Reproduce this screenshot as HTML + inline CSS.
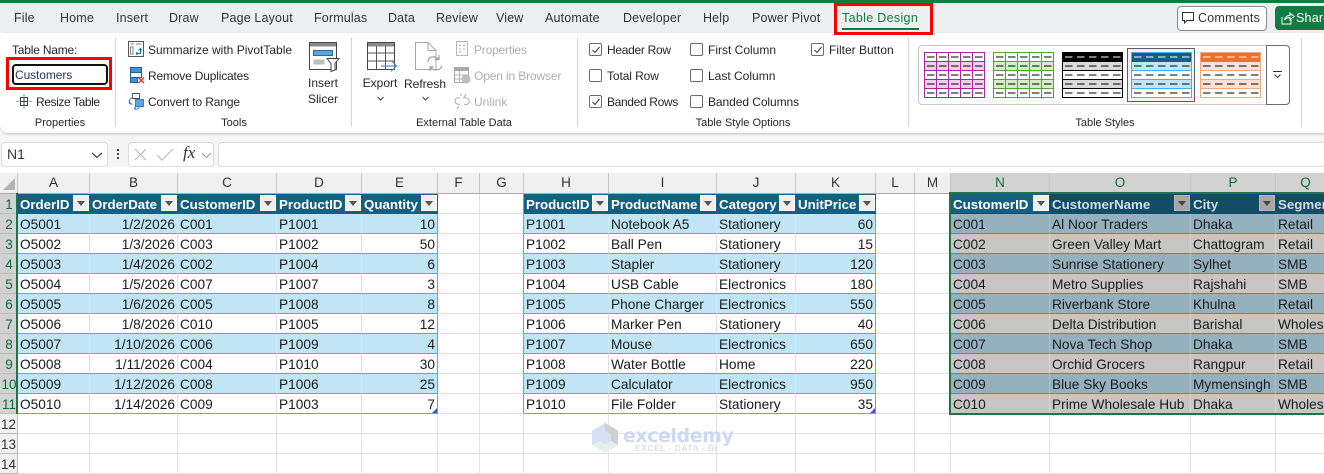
<!DOCTYPE html>
<html>
<head>
<meta charset="utf-8">
<style>
html,body{margin:0;padding:0;width:1324px;height:470px;overflow:hidden;background:#fff;font-family:"Liberation Sans",sans-serif;color:#242424}
.a{position:absolute;white-space:nowrap}
.t{position:absolute;white-space:nowrap;font-size:12px;line-height:16px;letter-spacing:0;color:#262626}
.c{transform:translateX(-50%);font-size:11px}
.n{letter-spacing:-.15px}
.tab{font-size:12.5px;line-height:16px;top:10px;letter-spacing:.15px;color:#333}
.g{color:#aeaeae}
.sep{position:absolute;top:38px;width:1px;height:89px;background:#d4d4d4}
.cb{position:absolute;width:11px;height:11px;border:1px solid #6b6b6b;border-radius:2px;background:#fff}
.cb svg{position:absolute;left:1px;top:1px}
svg{position:absolute;overflow:visible}
table{position:absolute;left:0;top:173px;border-collapse:separate;border-spacing:0;table-layout:fixed;width:1336px;font-size:13.7px;color:#1a1a1a}
th,td{box-sizing:border-box;height:20px;padding:2px 0 0 2px;overflow:hidden;white-space:nowrap;border-right:1px solid #e1e1e1;border-bottom:1px solid #e1e1e1;position:relative;font-weight:normal;line-height:17px;text-align:left}
th{background:#f0f0f0;text-align:center;padding:2px 0 0;color:#333;border-right:1px solid #bcbcbc;border-bottom:1px solid #bcbcbc;font-size:13.5px}
tr.ch th{height:21px;padding:0;line-height:20px;border-right:1px solid #c4c4c4;border-bottom:1px solid #aaa}
tr.ch th.s{background:#d2d2d2;color:#0f6b3a}
tr.sr th{background:#d2d2d2;color:#0f6b3a;border-right:none}
td.r{text-align:right;padding:2px 2px 0 0}
tr.h td{font-size:13.3px}
tr.h td:nth-child(n+2):nth-child(-n+6),tr.h td:nth-child(n+9):nth-child(-n+12){background:#156082;color:#fff;font-weight:bold;border-right-color:#156082;border-bottom-color:#156082}
tr.h td:nth-child(n+15){background:#124c66;color:#d3dde3;font-weight:bold;border-right-color:#124c66;border-bottom-color:#124c66}
tr.h td:nth-child(15){background:#156082;color:#fff}
tr.o td:nth-child(n+2):nth-child(-n+6),tr.o td:nth-child(n+9):nth-child(-n+12){background:#c0e6f5;border-right-color:#cde8f5;border-bottom-color:#45b0e1}
tr.e td:nth-child(n+2):nth-child(-n+6),tr.e td:nth-child(n+9):nth-child(-n+12){border-bottom-color:#45b0e1}
tr.o td:nth-child(n+15){background:#95b1c0;border-right-color:#a9bfcb;border-bottom-color:#3f8fb5}
tr.e td:nth-child(n+15){background:#c6c6c6;border-right-color:#d6d6d6;border-bottom-color:#3f8fb5}
tr.o td:nth-child(6),tr.e td:nth-child(6),tr.o td:nth-child(8),tr.e td:nth-child(8),tr.o td:nth-child(12),tr.e td:nth-child(12),tr.h td:nth-child(8){border-right-color:#45b0e1!important}
i.f{position:absolute;right:0;top:1px;width:16px;height:16px;background:#eee;border:1px solid #fff;box-sizing:border-box}
i.f:after{content:"";position:absolute;left:3px;top:5px;border-left:4px solid transparent;border-right:4px solid transparent;border-top:5px solid #555}
i.d{background:#a6a6a6;border-color:#b8b8b8}
i.d:after{border-top-color:#444}
</style>
</head>
<body>
<!-- title strip -->
<div class="a" style="left:0;top:0;width:1324px;height:33px;background:#eeeff1"></div>
<div class="a" style="left:0;top:0;width:1324px;height:3px;background:#107c41"></div>
<div class="a" style="left:0;top:133px;width:1324px;height:34px;background:#f5f5f5"></div>
<div class="a" style="left:0;top:33px;width:1324px;height:100px;background:#fff;border-radius:8px 0 0 8px;box-shadow:0 1px 2px rgba(0,0,0,.22)"></div>

<div class="a tab" style="left:14px">File</div>
<div class="a tab" style="left:60px">Home</div>
<div class="a tab" style="left:116px">Insert</div>
<div class="a tab" style="left:169px">Draw</div>
<div class="a tab" style="left:221px">Page Layout</div>
<div class="a tab" style="left:314px">Formulas</div>
<div class="a tab" style="left:388px">Data</div>
<div class="a tab" style="left:436px">Review</div>
<div class="a tab" style="left:496px">View</div>
<div class="a tab" style="left:545px">Automate</div>
<div class="a tab" style="left:623px">Developer</div>
<div class="a tab" style="left:703px">Help</div>
<div class="a tab" style="left:752px">Power Pivot</div>
<div class="a tab" style="left:842px;color:#107c41;letter-spacing:.32px">Table Design</div>
<div class="a" style="left:842px;top:28px;width:77px;height:2px;background:#107c41"></div>
<div class="a" style="left:834px;top:3px;width:93px;height:26px;border:3px solid #f00"></div>

<!-- comments and share -->
<div class="a" style="left:1177px;top:6px;width:88px;height:23px;background:#fff;border:1px solid #8a8a8a;border-radius:4px"></div>
<svg style="left:1182px;top:12px" width="13" height="13" viewBox="0 0 13 13"><path d="M.5 .5H11.500V8.500H5L2.500 11V8.500H.5Z" fill="none" stroke="#333"/></svg>
<div class="a tab" style="left:1198px;top:10px;font-size:12.5px;letter-spacing:.2px">Comments</div>
<div class="a" style="left:1275px;top:6px;width:70px;height:24px;background:#107c41;border-radius:4px"></div>
<svg style="left:1280px;top:11px" width="15" height="15" viewBox="0 0 15 15"><path d="M2 6V13H11V9M4.500 9C5 6 7 4.500 10 4.500V2L14 5.500L10 9V6.500C8 6.500 6 7 4.500 9Z" fill="none" stroke="#fff"/></svg>
<div class="a tab" style="left:1296px;color:#fff;font-size:12.5px;letter-spacing:.2px">Share</div>

<!-- separators -->
<div class="sep" style="left:115px"></div>
<div class="sep" style="left:351px"></div>
<div class="sep" style="left:577px"></div>
<div class="sep" style="left:908px"></div>
<div class="sep" style="left:1301px"></div>

<!-- Properties group -->
<div class="t" style="left:12px;top:42px;letter-spacing:-.2px">Table Name:</div>
<div class="a" style="left:6px;top:57px;width:100px;height:27px;border:3px solid #f00"></div>
<div class="a" style="left:12px;top:64px;width:92px;height:17px;border:2px solid #111;border-radius:4px;background:#fff"></div>
<div class="t" style="left:15px;top:67px;color:#1f3864;letter-spacing:-.1px">Customers</div>
<svg style="left:16px;top:94px" width="16" height="15" viewBox="0 0 16 15"><path d="M4.500 3.500H11.500V11.500H4.500ZM4.500 7.500H11.500M8 3.500V11.500" fill="none" stroke="#444"/><path d="M8 .5V2.500M8 12.500V14.500M.5 7.500H2.500M13.500 7.500H15.500" stroke="#2b7cd3"/></svg>
<div class="t" style="left:36px;top:94px;letter-spacing:-.4px">Resize Table</div>
<div class="t c" style="left:60px;top:115px">Properties</div>

<!-- Tools group -->
<svg style="left:128px;top:41px" width="16" height="16" viewBox="0 0 16 16"><path d="M.5 .5H15.500V15.500H.5Z" fill="#fff" stroke="#555"/><path d="M2.500 3H6M8 3H13.500M2.500 6H5V13H2.500Z" fill="none" stroke="#888"/><path d="M8 12.500H12.500V7.500M10.500 9.500L12.500 7.500L14 9.500M8 12.500L9.500 11M8 12.500L9.500 14" fill="none" stroke="#0f6cbd"/></svg>
<div class="t" style="left:148px;top:42px">Summarize with PivotTable</div>
<svg style="left:130px;top:67px" width="15" height="17" viewBox="0 0 15 17"><rect x=".5" y=".5" width="11" height="5" fill="#3f94d6" stroke="#245f93"/><rect x=".5" y="5.500" width="11" height="5" fill="#fff" stroke="#245f93"/><rect x=".5" y="10.500" width="7" height="5" fill="#3f94d6" stroke="#245f93"/><path d="M8.500 10.500L14 16M14 10.500L8.500 16" stroke="#e5312f" stroke-width="1.400"/></svg>
<div class="t" style="left:148px;top:68px;letter-spacing:-.18px">Remove Duplicates</div>
<svg style="left:128px;top:93px" width="17" height="17" viewBox="0 0 17 17"><rect x="4.500" y=".5" width="7" height="5" fill="#fff" stroke="#555"/><rect x="7.500" y="6.500" width="8" height="7" fill="#5ba6dc" stroke="#3b7fb4"/><path d="M4 5C1 6 .5 9 2 11M2 11V8.500M2 11H4.500M6 15.500C8 16.500 10 16 11 15M11 15V13M6 15.500L8 14M6 15.500L8 16.500" fill="none" stroke="#2b7cd3"/></svg>
<div class="t" style="left:148px;top:94px;letter-spacing:-.13px">Convert to Range</div>
<svg style="left:309px;top:42px" width="30" height="30" viewBox="0 0 30 30"><rect x=".5" y=".5" width="27" height="27" fill="#fff" stroke="#444"/><rect x="1" y="1" width="26" height="3.500" fill="#8a8a8a"/><rect x="4.500" y="8.500" width="19" height="5" fill="#5aa6dc" stroke="#1f6fb0"/><rect x="4.500" y="17.500" width="11" height="5" fill="#bdbdbd"/><path d="M18 16.500H30L26 21.500V28L22 29.500V21.500Z" fill="#fff" stroke="#444"/></svg>
<div class="t c" style="left:323px;top:75px;font-size:12px">Insert</div>
<div class="t c" style="left:323px;top:91px;font-size:12px">Slicer</div>
<div class="t c" style="left:234px;top:115px">Tools</div>

<!-- External data -->
<svg style="left:367px;top:42px" width="31" height="30" viewBox="0 0 31 30"><rect x=".5" y=".5" width="27" height="27" fill="#fff" stroke="#444"/><rect x="1" y="1" width="26" height="3.500" fill="#8a8a8a"/><path d="M1 11H27M1 19H27M9.500 4V27M18.500 4V27" stroke="#555" fill="none"/><path d="M14 24H29.500M24 18.500L29.500 24L24 29.500" stroke="#3f94d6" fill="none" stroke-width="1.200"/></svg>
<div class="t c" style="left:380px;top:75px;font-size:12px">Export</div>
<svg style="left:376px;top:96px" width="9" height="6" viewBox="0 0 9 6"><path d="M1.500 1L4.500 4L7.500 1" fill="none" stroke="#444"/></svg>
<svg style="left:415px;top:42px" width="29" height="30" viewBox="0 0 29 30"><path d="M.5 .5H13L21 8.500V27.500H.5Z" fill="#fff" stroke="#a8a8a8"/><path d="M13 .5V8.500H21" fill="none" stroke="#a8a8a8"/><path d="M13 20C13 15 19 13 24 17M27 24C25 29 18 29 15 25M24 13V17.500H19.500M15 29V25H19" fill="none" stroke="#a0a0a0" stroke-width="1.200"/></svg>
<div class="t c" style="left:425px;top:76px;font-size:12px">Refresh</div>
<svg style="left:421px;top:96px" width="9" height="6" viewBox="0 0 9 6"><path d="M1.500 1L4.500 4L7.500 1" fill="none" stroke="#444"/></svg>
<svg style="left:456px;top:41px" width="14" height="16" viewBox="0 0 14 16"><rect x=".5" y=".5" width="11" height="14" fill="#fff" stroke="#b5b5b5"/><path d="M3 4.500H5M7 4.500H9M3 8H5M3 11H5M7 8H9" stroke="#a5a5a5"/></svg>
<div class="t g" style="left:474px;top:42px;letter-spacing:-.2px">Properties</div>
<svg style="left:454px;top:67px" width="17" height="17" viewBox="0 0 17 17"><rect x=".5" y=".5" width="14" height="15" fill="#fff" stroke="#a9a9a9"/><rect x="1" y="1" width="13" height="3" fill="#a9a9a9"/><path d="M1 8H14M1 12H14M5.500 4V16" stroke="#b5b5b5"/><circle cx="12" cy="12" r="4.500" fill="#bdbdbd"/></svg>
<div class="t g" style="left:474px;top:68px;letter-spacing:-.14px">Open in Browser</div>
<svg style="left:454px;top:93px" width="17" height="17" viewBox="0 0 17 17"><path d="M6 5C3 4 1 6 1 8S3 12 6 11M9 5C12 4 16 6 15 9S12 12 10 11M5 13L3 16M7 .5V3M12 1L10 4" fill="none" stroke="#ababab"/></svg>
<div class="t g" style="left:474px;top:94px">Unlink</div>
<div class="t c" style="left:464px;top:115px">External Table Data</div>

<!-- checkboxes -->
<div class="cb" style="left:589px;top:43px"><svg width="10" height="10" viewBox="0 0 10 10"><path d="M1.500 5L4 7.500L8.500 2" fill="none" stroke="#333"/></svg></div>
<div class="t" style="left:607px;top:42px;letter-spacing:-.3px">Header Row</div>
<div class="cb" style="left:589px;top:69px"></div>
<div class="t" style="left:607px;top:68px;letter-spacing:-.1px">Total Row</div>
<div class="cb" style="left:589px;top:95px"><svg width="10" height="10" viewBox="0 0 10 10"><path d="M1.500 5L4 7.500L8.500 2" fill="none" stroke="#333"/></svg></div>
<div class="t" style="left:607px;top:94px;letter-spacing:-.35px">Banded Rows</div>
<div class="cb" style="left:690px;top:43px"></div>
<div class="t" style="left:708px;top:42px">First Column</div>
<div class="cb" style="left:690px;top:69px"></div>
<div class="t" style="left:708px;top:68px">Last Column</div>
<div class="cb" style="left:690px;top:95px"></div>
<div class="t" style="left:708px;top:94px;letter-spacing:-.07px">Banded Columns</div>
<div class="cb" style="left:811px;top:43px"><svg width="10" height="10" viewBox="0 0 10 10"><path d="M1.500 5L4 7.500L8.500 2" fill="none" stroke="#333"/></svg></div>
<div class="t" style="left:829px;top:42px">Filter Button</div>
<div class="t c" style="left:743px;top:115px">Table Style Options</div>

<!-- gallery -->
<div class="a" style="left:918px;top:45px;width:370px;height:58px;border:1px solid #c8c8c8;border-radius:4px;background:#fff"></div>
<div class="a" style="left:1266px;top:45px;width:22px;height:58px;border:1px solid #6e6e6e;border-radius:0 4px 4px 0;background:#fff"></div>
<svg style="left:1272px;top:70px" width="12" height="10" viewBox="0 0 12 10"><path d="M1 1.500H10M2.500 4.500L5.500 7.500L8.500 4.500" fill="none" stroke="#333"/></svg>
<div class="a" style="left:1127px;top:48px;width:66px;height:52px;border:1px solid #5c5c5c;background:#f3f3f3"></div>

<svg style="left:924px;top:52px" width="62" height="47" viewBox="0 0 62 47"><rect x=".5" y=".5" width="60" height="45" fill="#fff" stroke="#a6269b"/><rect x="1" y="10" width="59" height="8" fill="#f1cdee"/><rect x="1" y="28" width="59" height="8" fill="#f1cdee"/><path d="M1 9.500H60M1 18.500H60M1 27.500H60M1 36.500H60M12.500 1V46M24.500 1V46M36.500 1V46M48.500 1V46" stroke="#a6269b" fill="none"/><path d="M3 5H60M3 14H60M3 23H60M3 32H60M3 41H60" stroke="#000" stroke-dasharray="7.500 4.500" fill="none"/></svg>
<svg style="left:993px;top:52px" width="62" height="47" viewBox="0 0 62 47"><rect x=".5" y=".5" width="60" height="45" fill="#fff" stroke="#4ea72e"/><rect x="1" y="10" width="59" height="8" fill="#d5efca"/><rect x="1" y="28" width="59" height="8" fill="#d5efca"/><path d="M1 9.500H60M1 18.500H60M1 27.500H60M1 36.500H60M12.500 1V46M24.500 1V46M36.500 1V46M48.500 1V46" stroke="#4ea72e" fill="none"/><path d="M3 5H60M3 14H60M3 23H60M3 32H60M3 41H60" stroke="#000" stroke-dasharray="7.500 4.500" fill="none"/></svg>
<svg style="left:1062px;top:52px" width="62" height="47" viewBox="0 0 62 47"><rect x=".5" y=".5" width="60" height="45" fill="#fff" stroke="#000"/><rect x="1" y="1" width="59" height="9" fill="#000"/><rect x="1" y="10" width="59" height="8" fill="#d9d9d9"/><rect x="1" y="28" width="59" height="8" fill="#d9d9d9"/><path d="M1 18.500H60M1 27.500H60M1 36.500H60M1 9.500H60" stroke="#000" fill="none"/><path d="M3 5H60" stroke="#fff" stroke-dasharray="7.500 4.500" fill="none"/><path d="M3 14H60M3 23H60M3 32H60M3 41H60" stroke="#000" stroke-dasharray="7.500 4.500" fill="none"/></svg>
<svg style="left:1131px;top:52px" width="62" height="47" viewBox="0 0 62 47"><rect x=".5" y=".5" width="60" height="45" fill="#fff" stroke="#45b0e1"/><rect x="1" y="1" width="59" height="9" fill="#156082"/><rect x="1" y="10" width="59" height="8" fill="#c0e6f5"/><rect x="1" y="28" width="59" height="8" fill="#c0e6f5"/><path d="M1 18.500H60M1 27.500H60M1 36.500H60" stroke="#45b0e1" fill="none"/><path d="M3 5H60" stroke="#fff" stroke-dasharray="7.500 4.500" fill="none"/><path d="M3 14H60M3 23H60M3 32H60M3 41H60" stroke="#000" stroke-dasharray="7.500 4.500" fill="none"/></svg>
<svg style="left:1200px;top:52px" width="62" height="47" viewBox="0 0 62 47"><rect x=".5" y=".5" width="60" height="45" fill="#fff" stroke="#f4a77f"/><rect x="1" y="1" width="59" height="9" fill="#e97132"/><rect x="1" y="10" width="59" height="8" fill="#fbe1d5"/><rect x="1" y="28" width="59" height="8" fill="#fbe1d5"/><path d="M1 18.500H60M1 27.500H60M1 36.500H60" stroke="#f4a77f" fill="none"/><path d="M3 5H60" stroke="#fff" stroke-dasharray="7.500 4.500" fill="none"/><path d="M3 14H60M3 23H60M3 32H60M3 41H60" stroke="#000" stroke-dasharray="7.500 4.500" fill="none"/></svg>
<div class="t c" style="left:1105px;top:115px">Table Styles</div>

<!-- formula bar -->
<div class="a" style="left:1px;top:142px;width:105px;height:23px;background:#fff;border:1px solid #dcdcdc;border-radius:4px"></div>
<div class="a" style="left:7px;top:146px;font-size:14px;line-height:16px;color:#333">N1</div>
<svg style="left:91px;top:152px" width="12" height="7" viewBox="0 0 12 7"><path d="M1 1L6 5.500L11 1" fill="none" stroke="#444" stroke-width="1.200"/></svg>
<div class="a" style="left:117px;top:149px;width:2px;height:2px;background:#444;box-shadow:0 4px 0 #444,0 8px 0 #444"></div>
<div class="a" style="left:128px;top:142px;width:84px;height:23px;background:#fff;border:1px solid #dcdcdc;border-radius:4px"></div>
<svg style="left:134px;top:148px" width="40" height="13" viewBox="0 0 40 13"><path d="M1 1L12 12M12 1L1 12" stroke="#bcbcbc" fill="none" stroke-width="1.200"/><path d="M23 7L28 12L39 1" stroke="#bcbcbc" fill="none" stroke-width="1.200"/></svg>
<div class="a" style="left:183px;top:144px;font:italic 17px/18px 'Liberation Serif',serif;color:#333">fx</div>
<svg style="left:201px;top:152px" width="11" height="7" viewBox="0 0 11 7"><path d="M1 1L5.500 5.500L10 1" fill="none" stroke="#9a9a9a" stroke-width="1.100"/></svg>
<div class="a" style="left:218px;top:142px;width:1110px;height:23px;background:#fff;border:1px solid #dcdcdc;border-radius:4px"></div>

<!-- sheet -->
<table>
<colgroup><col style="width:18px"><col style="width:72px"><col style="width:88px"><col style="width:99px"><col style="width:85px"><col style="width:76px"><col style="width:42px"><col style="width:44px"><col style="width:85px"><col style="width:108px"><col style="width:79px"><col style="width:80px"><col style="width:39px"><col style="width:36px"><col style="width:99px"><col style="width:141px"><col style="width:85px"><col style="width:60px"></colgroup>
<tr class="ch"><th></th><th>A</th><th>B</th><th>C</th><th>D</th><th>E</th><th>F</th><th>G</th><th>H</th><th>I</th><th>J</th><th>K</th><th>L</th><th>M</th><th class="s">N</th><th class="s">O</th><th class="s">P</th><th class="s">Q</th></tr>
<tr class="h sr"><th>1</th><td>OrderID<i class="f"></i></td><td>OrderDate<i class="f"></i></td><td>CustomerID<i class="f"></i></td><td>ProductID<i class="f"></i></td><td>Quantity<i class="f"></i></td><td></td><td></td><td>ProductID<i class="f"></i></td><td>ProductName<i class="f"></i></td><td>Category<i class="f"></i></td><td>UnitPrice<i class="f"></i></td><td></td><td></td><td>CustomerID<i class="f"></i></td><td>CustomerName<i class="f d"></i></td><td>City<i class="f d"></i></td><td>Segment</td></tr>
<tr class="o sr"><th>2</th><td>O5001</td><td class="r">1/2/2026</td><td>C001</td><td>P1001</td><td class="r">10</td><td></td><td></td><td>P1001</td><td>Notebook A5</td><td>Stationery</td><td class="r">60</td><td></td><td></td><td>C001</td><td>Al Noor Traders</td><td>Dhaka</td><td>Retail</td></tr>
<tr class="e sr"><th>3</th><td>O5002</td><td class="r">1/3/2026</td><td>C003</td><td>P1002</td><td class="r">50</td><td></td><td></td><td>P1002</td><td>Ball Pen</td><td>Stationery</td><td class="r">15</td><td></td><td></td><td>C002</td><td>Green Valley Mart</td><td>Chattogram</td><td>Retail</td></tr>
<tr class="o sr"><th>4</th><td>O5003</td><td class="r">1/4/2026</td><td>C002</td><td>P1004</td><td class="r">6</td><td></td><td></td><td>P1003</td><td>Stapler</td><td>Stationery</td><td class="r">120</td><td></td><td></td><td>C003</td><td>Sunrise Stationery</td><td>Sylhet</td><td>SMB</td></tr>
<tr class="e sr"><th>5</th><td>O5004</td><td class="r">1/5/2026</td><td>C007</td><td>P1007</td><td class="r">3</td><td></td><td></td><td>P1004</td><td>USB Cable</td><td>Electronics</td><td class="r">180</td><td></td><td></td><td>C004</td><td>Metro Supplies</td><td>Rajshahi</td><td>SMB</td></tr>
<tr class="o sr"><th>6</th><td>O5005</td><td class="r">1/6/2026</td><td>C005</td><td>P1008</td><td class="r">8</td><td></td><td></td><td>P1005</td><td>Phone Charger</td><td>Electronics</td><td class="r">550</td><td></td><td></td><td>C005</td><td>Riverbank Store</td><td>Khulna</td><td>Retail</td></tr>
<tr class="e sr"><th>7</th><td>O5006</td><td class="r">1/8/2026</td><td>C010</td><td>P1005</td><td class="r">12</td><td></td><td></td><td>P1006</td><td>Marker Pen</td><td>Stationery</td><td class="r">40</td><td></td><td></td><td>C006</td><td>Delta Distribution</td><td>Barishal</td><td>Wholesale</td></tr>
<tr class="o sr"><th>8</th><td>O5007</td><td class="r">1/10/2026</td><td>C006</td><td>P1009</td><td class="r">4</td><td></td><td></td><td>P1007</td><td>Mouse</td><td>Electronics</td><td class="r">650</td><td></td><td></td><td>C007</td><td>Nova Tech Shop</td><td>Dhaka</td><td>SMB</td></tr>
<tr class="e sr"><th>9</th><td>O5008</td><td class="r">1/11/2026</td><td>C004</td><td>P1010</td><td class="r">30</td><td></td><td></td><td>P1008</td><td>Water Bottle</td><td>Home</td><td class="r">220</td><td></td><td></td><td>C008</td><td>Orchid Grocers</td><td>Rangpur</td><td>Retail</td></tr>
<tr class="o sr"><th>10</th><td>O5009</td><td class="r">1/12/2026</td><td>C008</td><td>P1006</td><td class="r">25</td><td></td><td></td><td>P1009</td><td>Calculator</td><td>Electronics</td><td class="r">950</td><td></td><td></td><td>C009</td><td>Blue Sky Books</td><td>Mymensingh</td><td>SMB</td></tr>
<tr class="e sr"><th>11</th><td>O5010</td><td class="r">1/14/2026</td><td>C009</td><td>P1003</td><td class="r">7</td><td></td><td></td><td>P1010</td><td>File Folder</td><td>Stationery</td><td class="r">35</td><td></td><td></td><td>C010</td><td>Prime Wholesale Hub</td><td>Dhaka</td><td>Wholesale</td></tr>
<tr><th>12</th><td></td><td></td><td></td><td></td><td></td><td></td><td></td><td></td><td></td><td></td><td></td><td></td><td></td><td></td><td></td><td></td><td></td></tr>
<tr><th>13</th><td></td><td></td><td></td><td></td><td></td><td></td><td></td><td></td><td></td><td></td><td></td><td></td><td></td><td></td><td></td><td></td><td></td></tr>
<tr><th>14</th><td></td><td></td><td></td><td></td><td></td><td></td><td></td><td></td><td></td><td></td><td></td><td></td><td></td><td></td><td></td><td></td><td></td></tr>
</table>

<!-- sheet overlays -->
<div class="a" style="left:0;top:173px;width:16px;height:20px;background:#f0f0f0"></div>
<svg style="left:2px;top:177px" width="14" height="14" viewBox="0 0 14 14"><path d="M13 1V13H1Z" fill="#b4b4b4"/></svg>
<div class="a" style="left:16px;top:193px;width:2px;height:221px;background:#217346"></div>
<div class="a" style="left:949px;top:192px;width:380px;height:219px;border:2px solid #217346"></div>
<svg style="left:432px;top:408px" width="5" height="5" viewBox="0 0 5 5"><path d="M5 0V5H0Z" fill="#3c5cc0"/></svg>
<svg style="left:870px;top:408px" width="5" height="5" viewBox="0 0 5 5"><path d="M5 0V5H0Z" fill="#3c5cc0"/></svg>

<!-- watermark -->
<svg style="left:591px;top:423px" width="28" height="31" viewBox="0 0 28 31"><path d="M14 0L27 7.500V22L14 30L1 22V7.500Z" fill="#d5e0f5"/><path d="M14 0L27 7.500V22L20 18V11L14 8Z" fill="#cfcfd6"/><path d="M1 22L14 30L27 22L20 18L14 21L8 18Z" fill="#e7eef0"/></svg>
<div class="a" style="left:623px;top:424px;font:bold 19px/24px 'DejaVu Sans',sans-serif;letter-spacing:-.45px;color:#cdd9f3">exceldemy</div>
<div class="a" style="left:635px;top:443px;font:bold 8.500px/11px 'Liberation Sans',sans-serif;letter-spacing:.5px;color:#dedede">EXCEL - DATA - BI</div>
</body>
</html>
